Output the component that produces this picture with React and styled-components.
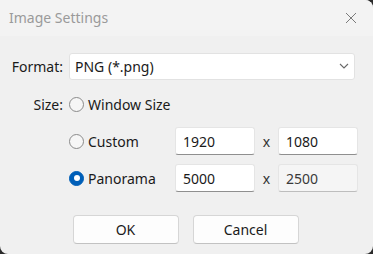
import React from "react";
import styled, { createGlobalStyle } from "styled-components";

const GlobalStyle = createGlobalStyle`
  html, body {
    margin: 0;
    padding: 0;
    background: #2b2b2b;
  }
  body {
    font-family: "Noto Sans", "Open Sans", sans-serif;
  }
`;

const Window = styled.div`
  width: 373px;
  height: 254px;
  background: #f0f0f0;
  border-radius: 0 8px 8px 8px;
  display: flex;
  flex-direction: column;
  overflow: hidden;
  color: #1a1a1a;
`;

const TitleBar = styled.div`
  height: 36px;
  display: flex;
  align-items: center;
  justify-content: space-between;
  padding: 0 16px 0 9px;
  background: #f3f3f3;
`;

const Title = styled.span`
  font-size: 14px;
  color: #9a9a9a;
  margin-top: -2px;
`;

const Body = styled.div`
  display: flex;
  flex-direction: column;
  padding: 16px 0 0 0;
`;

const FormatRow = styled.div`
  display: flex;
  align-items: center;
  height: 28px;
`;

const Label = styled.span`
  width: 63px;
  text-align: right;
  font-size: 14px;
  padding-right: 6px;
  box-sizing: content-box;
`;

const Combo = styled.div`
  width: 286px;
  height: 27px;
  box-sizing: border-box;
  background: #fff;
  border: 1px solid #e2e2e2;
  border-radius: 3px;
  display: flex;
  align-items: center;
  justify-content: space-between;
  padding: 0 5px 0 5px;
  font-size: 14px;
`;

const OptionGrid = styled.div`
  display: grid;
  grid-template-columns: 69px 106px 80px 23px 80px;
  grid-auto-rows: 28px;
  row-gap: 9px;
  align-items: center;
  margin-top: 10px;
`;

const RadioOption = styled.label`
  grid-column: 2 / ${(p) => (p.$wide ? 6 : 3)};
  display: flex;
  align-items: center;
  gap: 4px;
  font-size: 14px;
`;

const RadioDot = styled.span`
  width: 15px;
  height: 15px;
  box-sizing: border-box;
  border-radius: 50%;
  border: 1px solid ${(p) => (p.$checked ? "#005fb8" : "#8a8a8a")};
  background: ${(p) => (p.$checked ? "#005fb8" : "#f6f6f6")};
  display: flex;
  align-items: center;
  justify-content: center;
  &::after {
    content: "";
    display: ${(p) => (p.$checked ? "block" : "none")};
    width: 6px;
    height: 6px;
    border-radius: 50%;
    background: #fff;
  }
`;

const NumberBox = styled.div`
  height: 28px;
  box-sizing: border-box;
  background: ${(p) => (p.$disabled ? "#f5f5f5" : "#fff")};
  border: 1px solid #e5e5e5;
  border-bottom: 1px solid ${(p) => (p.$disabled ? "#bdbdbd" : "#8f8f8f")};
  border-radius: 3px;
  display: flex;
  align-items: center;
  padding-left: 7px;
  font-size: 14px;
  color: ${(p) => (p.$disabled ? "#3a3a3a" : "#1a1a1a")};
`;

const Times = styled.span`
  text-align: center;
  font-size: 14px;
  color: #333;
`;

const ButtonRow = styled.div`
  display: flex;
  justify-content: center;
  gap: 14px;
  margin-top: 23px;
  padding-right: 2px;
`;

const Button = styled.button`
  width: 106px;
  height: 29px;
  background: #fdfdfd;
  border: 1px solid #d6d6d6;
  border-bottom-color: #c2c2c2;
  border-radius: 4px;
  font-family: inherit;
  font-size: 14px;
  color: #1a1a1a;
`;

function CloseIcon() {
  return (
    <svg width="12" height="12" viewBox="0 0 12 12">
      <path d="M1 1 L11 11 M11 1 L1 11" stroke="#7a7a7a" strokeWidth="1" />
    </svg>
  );
}

function Chevron() {
  return (
    <svg width="10" height="6" viewBox="0 0 10 6">
      <path d="M1 1 L5 5 L9 1" stroke="#6a6a6a" strokeWidth="1.1" fill="none" />
    </svg>
  );
}

function Radio({ checked, children, wide }) {
  return (
    <RadioOption $wide={wide}>
      <RadioDot $checked={checked} />
      {children}
    </RadioOption>
  );
}

export default function App() {
  return (
    <>
      <GlobalStyle />
      <Window>
        <TitleBar>
          <Title>Image Settings</Title>
          <CloseIcon />
        </TitleBar>
        <Body>
          <FormatRow>
            <Label>Format:</Label>
            <Combo>
              <span>PNG (*.png)</span>
              <Chevron />
            </Combo>
          </FormatRow>
          <OptionGrid>
            <Label>Size:</Label>
            <Radio wide>Window Size</Radio>

            <span />
            <Radio>Custom</Radio>
            <NumberBox>1920</NumberBox>
            <Times>x</Times>
            <NumberBox>1080</NumberBox>

            <span />
            <Radio checked>Panorama</Radio>
            <NumberBox>5000</NumberBox>
            <Times>x</Times>
            <NumberBox $disabled>2500</NumberBox>
          </OptionGrid>
          <ButtonRow>
            <Button>OK</Button>
            <Button>Cancel</Button>
          </ButtonRow>
        </Body>
      </Window>
    </>
  );
}
